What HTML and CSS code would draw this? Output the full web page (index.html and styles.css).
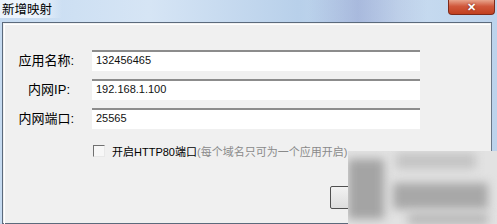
FILE: index.html
```html
<!DOCTYPE html>
<html lang="zh">
<head>
    <meta charset="utf-8" />
    <title>新增映射</title>
    <link rel="stylesheet" href="styles.css">
</head>
<body>
    <div class="window">
        <div class="titlebar">
            <span class="title">新增映射</span>
            <button class="close">&#x2715;</button>
        </div>
        <div class="frame">
            <div class="panel">
                <div class="form">
                    <label class="lbl">应用名称:</label>
                    <div class="field">132456465</div>
                    <label class="lbl ip">内网IP:</label>
                    <div class="field">192.168.1.100</div>
                    <label class="lbl">内网端口:</label>
                    <div class="field">25565</div>
                </div>
                <div class="check-row">
                    <span class="box"></span>
                    <span class="check-text">开启HTTP80端口</span>
                    <span class="hint">(每个域名只可为一个应用开启)</span>
                </div>
                <div class="buttons">
                    <button class="btn">确定</button>
                </div>
            </div>
        </div>
        <!-- blurred watermark in the corner -->
        <div class="mark">
            <div class="blob b1"></div>
            <div class="blob b2"></div>
            <div class="blob b3"></div>
            <div class="blob b4"></div>
        </div>
    </div>
</body>
</html>
```

FILE: styles.css
```css
body {
    margin: 0;
    font-family: "Liberation Sans", "Noto Sans CJK SC", sans-serif;
    font-size: 12px;
    background-color: #c9dcef;
}
.window {
    position: relative;
    width: 497px;
    height: 224px;
    overflow: hidden;
    background: linear-gradient(90deg, #c6dbf1 0%, #d6e5f5 30%, #b8d0ea 60%, #c9dcf0 80%, #bcd3ec 100%);
}
.titlebar {
    height: 22px;
    display: flex;
    align-items: flex-start;
    justify-content: space-between;
    background: linear-gradient(90deg, transparent 62%, rgba(120,130,190,0.35) 72%, transparent 86%);
}
.title {
    padding: 3px 10px 0 2px;
    line-height: 15px;
    font-size: 12.5px;
    color: #000;
    background: linear-gradient(90deg, rgba(238,245,252,0.95) 60%, rgba(238,245,252,0));
}
.close {
    width: 47px;
    height: 15px;
    margin-right: 2px;
    border: 1px solid #7e2a1a;
    border-top: none;
    border-radius: 0 0 4px 4px;
    background: linear-gradient(#e8a48c, #d0583c 45%, #c2401f);
    color: #fff;
    font-size: 11px;
    font-weight: bold;
    line-height: 13px;
    padding: 0;
    text-shadow: 0 0 2px #6b1a0c;
}
.frame {
    margin: 0 5px 0 2px;
    height: 200px;
    border: 1px solid #5b6a7c;
    border-right-color: #6a7788;
    background: #f0f0f0;
}
.panel {
    height: 194px;
    margin: 1px 1px 0 1px;
    border-top: 1px solid #fff;
    border-left: 1px solid #fff;
    border-bottom: 2px solid #d9e4f0;
    padding-top: 25px;
}
.form {
    display: grid;
    grid-template-columns: 87px 328px;
    row-gap: 8px;
}
.lbl {
    text-align: right;
    padding-right: 18px;
    line-height: 21px;
    font-size: 13px;
    color: #000;
}
.lbl.ip {
    padding-right: 22px;
}
.field {
    height: 19px;
    border-top: 2px solid #8c8c8c;
    background: #fff;
    padding-left: 4px;
    font-size: 11px;
    line-height: 17px;
    color: #111;
}
.check-row {
    display: flex;
    align-items: center;
    margin: 14px 0 0 88px;
    white-space: nowrap;
}
.box {
    width: 10px;
    height: 10px;
    border: 1px solid #707070;
    border-right-color: #e8e8e8;
    border-bottom-color: #e8e8e8;
    background: #f7f7f7;
    margin-right: 7px;
}
.check-text {
    color: #000;
    font-size: 11px;
}
.hint {
    color: #8a8a8a;
    font-size: 11px;
}
.buttons {
    display: flex;
    justify-content: flex-end;
    margin-top: 27px;
    padding-right: 84px;
}
.btn {
    width: 76px;
    height: 23px;
    border: 1px solid #505050;
    border-radius: 2px;
    background: linear-gradient(#f2f2f2, #dddddd);
    font-family: inherit;
    font-size: 12px;
    padding: 0;
}
.mark {
    position: absolute;
    left: 348px;
    top: 151px;
    width: 149px;
    height: 73px;
    background: #e2e2e2;
    overflow: hidden;
}
.blob {
    position: absolute;
    filter: blur(5px);
}
.b1 { left: 0; top: 8px; width: 36px; height: 60px; background: #a4a4a4; }
.b2 { left: 48px; top: 2px; width: 80px; height: 16px; background: #c4c4c4; }
.b3 { left: 45px; top: 32px; width: 95px; height: 26px; background: #a8a8a8; }
.b4 { left: 60px; top: 62px; width: 80px; height: 12px; background: #b8b8b8; }
```
